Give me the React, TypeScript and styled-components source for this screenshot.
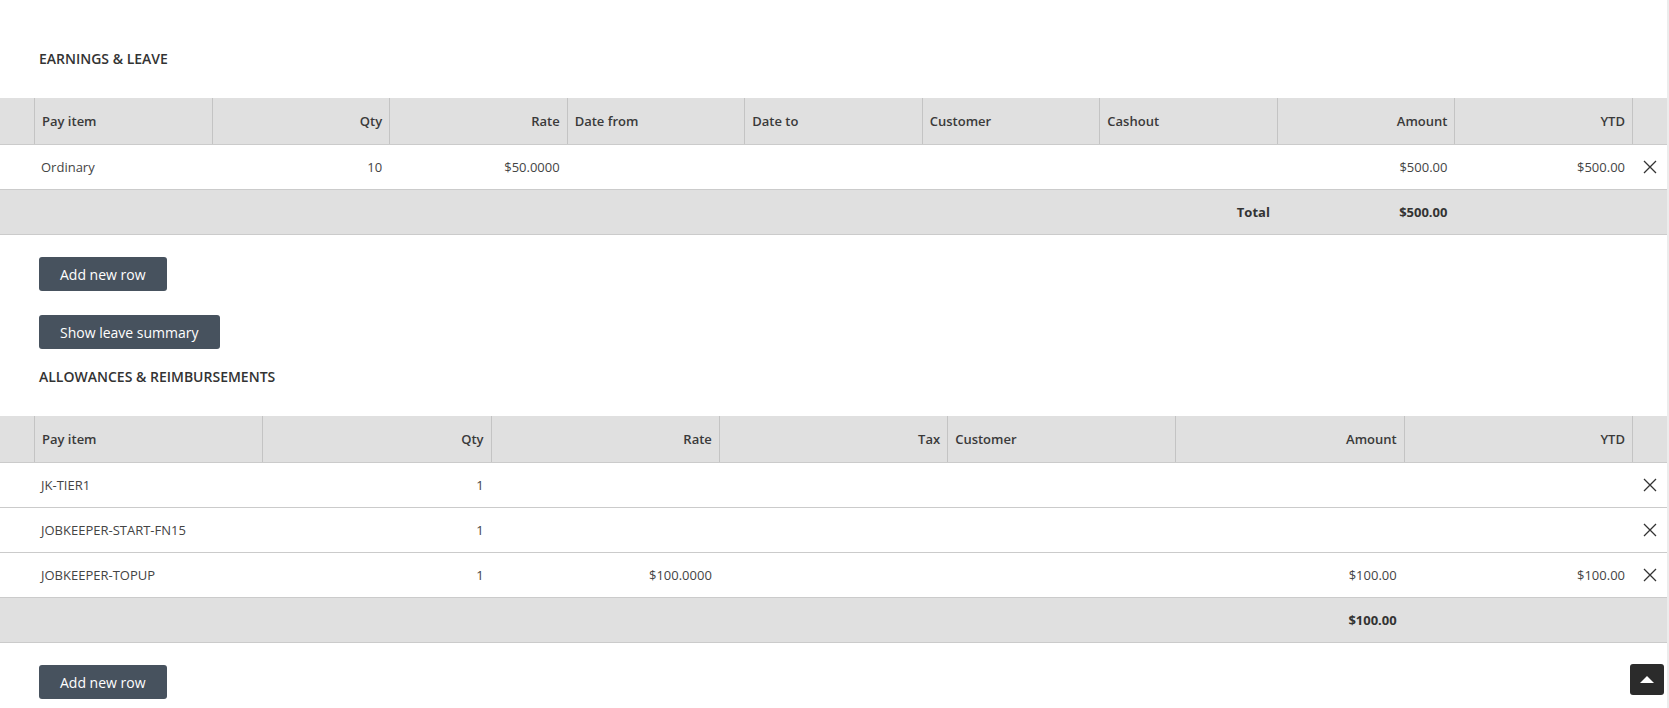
import React from "react";
import styled, { createGlobalStyle } from "styled-components";

const GlobalStyle = createGlobalStyle`
  html, body { margin: 0; padding: 0; background: #fff; overflow: hidden; }
  body { font-family: "Open Sans", "Liberation Sans", sans-serif; color: #333; }
  * { box-sizing: border-box; }
`;

const Page = styled.div`
  position: relative;
  width: 1669px;
  height: 708px;
  border-right: 2px solid #ececec;
  padding-top: 49px;
`;

const SectionTitle = styled.h2<{ $top?: number }>`
  margin: ${(p) => p.$top ?? 0}px 0 29px 0;
  padding-left: 39px;
  font-size: 14px;
  line-height: 20px;
  font-weight: 600;
  color: #333;
  text-transform: uppercase;
`;

const Table = styled.div`
  width: 1667px;
`;

const Row = styled.div<{ $cols: number; $variant: "head" | "body" | "total" }>`
  display: grid;
  grid-template-columns: 34px repeat(${(p) => p.$cols}, 1fr) 35px;
  height: ${(p) => (p.$variant === "head" ? 47 : 45)}px;
  background: ${(p) => (p.$variant === "body" ? "#fff" : "#e0e0e0")};
  border-bottom: 1px solid #cbcbcb;
`;

const Cell = styled.div<{ $align?: "left" | "right"; $head?: boolean; $bold?: boolean }>`
  display: flex;
  align-items: center;
  justify-content: ${(p) => (p.$align === "right" ? "flex-end" : "flex-start")};
  padding: 0 7px 0 7px;
  font-size: 13px;
  font-weight: ${(p) => (p.$bold ? 700 : p.$head ? 600 : 400)};
  color: ${(p) => (p.$head ? "#3a3a3a" : p.$bold ? "#333" : "#444")};
  border-left: ${(p) => (p.$head ? "1px solid #c4c4c4" : "none")};
  white-space: nowrap;
  overflow: hidden;
`;

const Spacer = styled.div``;

const ActionCell = styled.div`
  display: flex;
  align-items: center;
  justify-content: center;
  color: #333;
`;

const HeadEnd = styled.div`
  border-left: 1px solid #c4c4c4;
`;

const Button = styled.button<{ $top: number }>`
  display: block;
  margin: ${(p) => p.$top}px 0 0 39px;
  height: 34px;
  padding: 0 21px;
  border: none;
  border-radius: 3px;
  background: #47525e;
  color: #fff;
  font-family: "Open Sans", "Liberation Sans", sans-serif;
  font-size: 14px;
  cursor: pointer;
`;

const ScrollTop = styled.button`
  position: absolute;
  right: 3px;
  bottom: 13px;
  width: 34px;
  height: 31px;
  border: none;
  border-radius: 3px;
  background: #2b2b2b;
  display: flex;
  align-items: center;
  justify-content: center;
  padding: 0;
`;

const CloseIcon = () => (
  <svg width="14" height="14" viewBox="0 0 14 14" fill="none">
    <path d="M1 1L13 13M13 1L1 13" stroke="#333" strokeWidth="1.3" />
  </svg>
);

type Col = { label: string; align: "left" | "right" };

type TableProps = {
  cols: Col[];
  rows: string[][];
  total: string[];
};

const DataTable = ({ cols, rows, total }: TableProps) => (
  <Table>
    <Row $cols={cols.length} $variant="head">
      <Spacer />
      {cols.map((c) => (
        <Cell key={c.label} $head $align={c.align}>
          {c.label}
        </Cell>
      ))}
      <HeadEnd />
    </Row>
    {rows.map((r, i) => (
      <Row key={i} $cols={cols.length} $variant="body">
        <Spacer />
        {cols.map((c, j) => (
          <Cell key={j} $align={c.align}>
            {r[j]}
          </Cell>
        ))}
        <ActionCell>
          <CloseIcon />
        </ActionCell>
      </Row>
    ))}
    <Row $cols={cols.length} $variant="total">
      <Spacer />
      {cols.map((c, j) => (
        <Cell key={j} $align="right" $bold>
          {total[j]}
        </Cell>
      ))}
      <Spacer />
    </Row>
  </Table>
);

const earningsCols: Col[] = [
  { label: "Pay item", align: "left" },
  { label: "Qty", align: "right" },
  { label: "Rate", align: "right" },
  { label: "Date from", align: "left" },
  { label: "Date to", align: "left" },
  { label: "Customer", align: "left" },
  { label: "Cashout", align: "left" },
  { label: "Amount", align: "right" },
  { label: "YTD", align: "right" },
];

const allowanceCols: Col[] = [
  { label: "Pay item", align: "left" },
  { label: "Qty", align: "right" },
  { label: "Rate", align: "right" },
  { label: "Tax", align: "right" },
  { label: "Customer", align: "left" },
  { label: "Amount", align: "right" },
  { label: "YTD", align: "right" },
];

export default function App() {
  return (
    <>
      <GlobalStyle />
      <Page>
        <SectionTitle>Earnings &amp; Leave</SectionTitle>
        <DataTable
          cols={earningsCols}
          rows={[["Ordinary", "10", "$50.0000", "", "", "", "", "$500.00", "$500.00"]]}
          total={["", "", "", "", "", "", "Total", "$500.00", ""]}
        />
        <Button $top={22}>Add new row</Button>
        <Button $top={24}>Show leave summary</Button>
        <SectionTitle $top={18}>Allowances &amp; Reimbursements</SectionTitle>
        <DataTable
          cols={allowanceCols}
          rows={[
            ["JK-TIER1", "1", "", "", "", "", ""],
            ["JOBKEEPER-START-FN15", "1", "", "", "", "", ""],
            ["JOBKEEPER-TOPUP", "1", "$100.0000", "", "", "$100.00", "$100.00"],
          ]}
          total={["", "", "", "", "", "$100.00", ""]}
        />
        <Button $top={22}>Add new row</Button>
        <ScrollTop aria-label="Scroll to top">
          <svg width="14" height="7" viewBox="0 0 14 7">
            <path d="M0 7L7 0L14 7Z" fill="#fff" />
          </svg>
        </ScrollTop>
      </Page>
    </>
  );
}
